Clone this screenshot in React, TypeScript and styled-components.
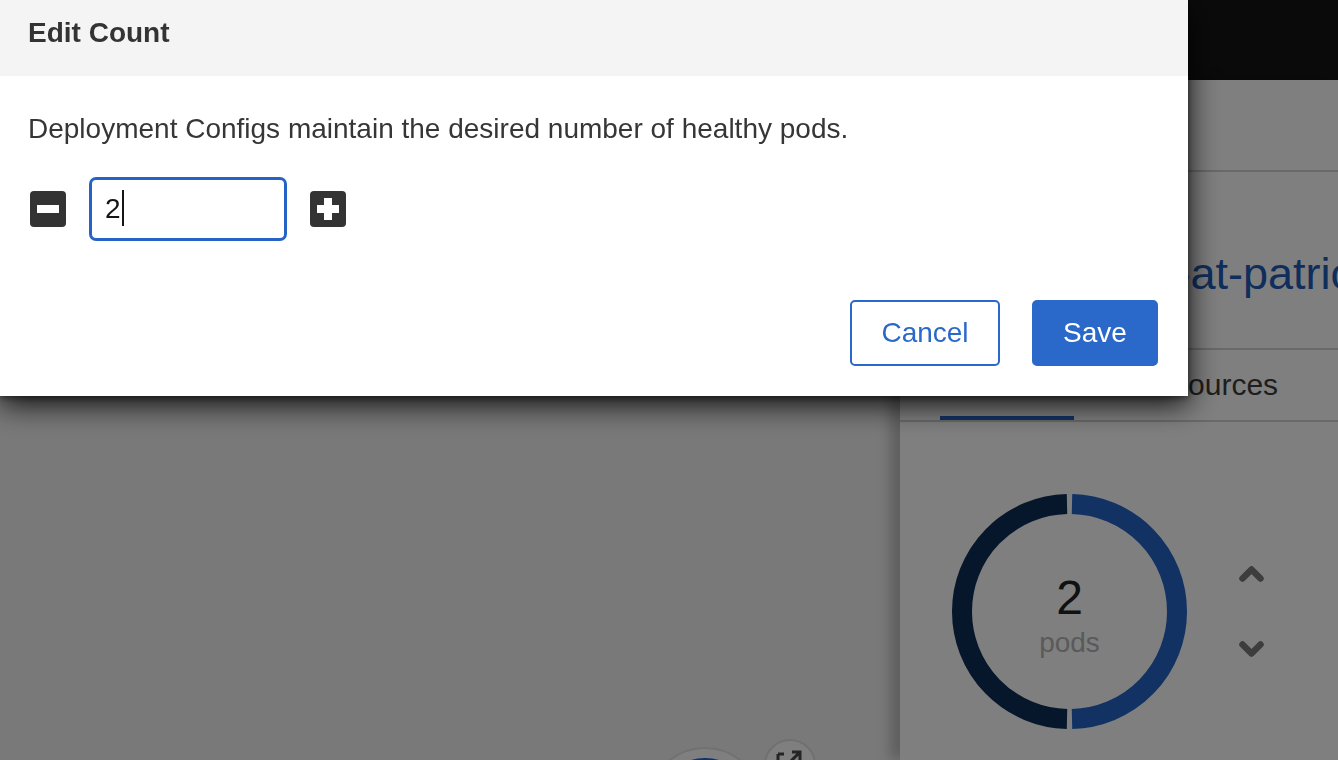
import React from "react";
import styled, { createGlobalStyle } from "styled-components";

const GlobalStyle = createGlobalStyle`
  html, body { margin: 0; padding: 0; }
  body {
    font-family: "Liberation Sans", Arial, sans-serif;
    overflow: hidden;
    background: #f0f0f0;
  }
  * { box-sizing: border-box; }
`;

const Page = styled.div`
  width: 1338px;
  height: 760px;
  display: flex;
  flex-direction: column;
  overflow: hidden;
`;

const Masthead = styled.header`
  flex: none;
  height: 80px;
  background: #151515;
`;

const Main = styled.div`
  flex: 1;
  display: flex;
  min-height: 0;
`;

const Canvas = styled.div`
  flex: 1;
  position: relative;
  background: #f2f2f2;
  overflow: hidden;
`;

const GraphLayer = styled.svg`
  position: absolute;
  left: 640px;
  top: 650px;
`;

const Drawer = styled.aside`
  width: 438px;
  flex: none;
  background: #ffffff;
  box-shadow: -10px 0 12px rgba(0, 0, 0, 0.22);
  display: flex;
  flex-direction: column;
  position: relative;
  z-index: 1;
  overflow: hidden;
`;

const DrawerTop = styled.div`
  height: 92px;
  border-bottom: 2px solid #d2d2d2;
`;

const TitleSection = styled.div`
  height: 178px;
  padding: 75px 0 0 63px;
  border-bottom: 2px solid #d2d2d2;
  white-space: nowrap;
`;

const ResourceTitle = styled.h2`
  margin: 0;
  font-size: 45px;
  line-height: 54px;
  font-weight: 400;
  color: #1f5cb8;
`;

const TabList = styled.div`
  height: 72px;
  display: flex;
  gap: 40px;
  padding-left: 40px;
  border-bottom: 2px solid #d2d2d2;
  white-space: nowrap;
`;

const Tab = styled.div<{ $active?: boolean }>`
  height: 70px;
  padding: 0 21px;
  display: flex;
  align-items: center;
  font-size: 30px;
  color: #3c3c3c;
  box-shadow: ${(p) => (p.$active ? "inset 0 -4px 0 #2464c6" : "none")};
`;

const DonutSection = styled.div`
  padding: 72px 0 0 52px;
  display: flex;
  align-items: center;
  gap: 52px;
`;

const Donut = styled.div`
  width: 235px;
  height: 235px;
  display: grid;
  place-items: center;
  & > * {
    grid-area: 1 / 1;
  }
`;

const DonutLabel = styled.div`
  display: flex;
  flex-direction: column;
  align-items: center;
  gap: 7px;
  margin-top: 8px;
`;

const PodCount = styled.span`
  font-size: 48px;
  line-height: 48px;
  color: #222222;
`;

const PodUnit = styled.span`
  font-size: 28px;
  line-height: 28px;
  color: #b5b5b5;
`;

const ScaleControls = styled.div`
  display: flex;
  flex-direction: column;
  gap: 59px;
`;

const Backdrop = styled.div`
  position: fixed;
  inset: 0;
  background: rgba(0, 0, 0, 0.5);
  z-index: 10;
`;

const Modal = styled.div`
  position: absolute;
  left: 0;
  top: 0;
  width: 1188px;
  background: #ffffff;
  box-shadow: 0 8px 28px rgba(0, 0, 0, 0.9), 0 2px 6px rgba(0, 0, 0, 0.4);
`;

const ModalHeader = styled.div`
  height: 76px;
  padding: 19px 28px 0;
  background: #f4f4f4;
`;

const ModalTitle = styled.h1`
  margin: 0;
  font-size: 28px;
  line-height: 28px;
  font-weight: 700;
  color: #333333;
`;

const ModalBody = styled.div`
  padding: 32px 28px 0;
`;

const Description = styled.p`
  margin: 0 0 27px;
  font-size: 28px;
  line-height: 42px;
  color: #363636;
`;

const CountRow = styled.div`
  display: flex;
  align-items: center;
  gap: 21px;
`;

const IconButton = styled.button`
  width: 40px;
  height: 40px;
  padding: 0;
  border: none;
  background: transparent;
  display: flex;
  align-items: center;
  justify-content: center;
  cursor: pointer;
`;

const InputWrap = styled.div`
  position: relative;
`;

const CountInput = styled.input`
  display: block;
  width: 198px;
  height: 64px;
  padding: 0 0 0 13px;
  border: 3px solid #2563c4;
  border-radius: 7px;
  font-family: "Liberation Sans", Arial, sans-serif;
  font-size: 28px;
  color: #151515;
  outline: none;
  background: #ffffff;
`;

const Caret = styled.span`
  position: absolute;
  left: 33px;
  top: 13px;
  width: 2px;
  height: 36px;
  background: #151515;
`;

const ModalFooter = styled.div`
  display: flex;
  justify-content: flex-end;
  gap: 32px;
  padding: 59px 30px 30px;
`;

const Button = styled.button<{ $primary?: boolean }>`
  height: 66px;
  width: ${(p) => (p.$primary ? "126px" : "150px")};
  border-radius: 5px;
  font-family: "Liberation Sans", Arial, sans-serif;
  font-size: 28px;
  cursor: pointer;
  border: 2px solid #2a69c9;
  background: ${(p) => (p.$primary ? "#2a69c9" : "#ffffff")};
  color: ${(p) => (p.$primary ? "#ffffff" : "#2a69c9")};
`;

const MinusIcon = () => (
  <svg width="36" height="36" viewBox="0 0 36 36">
    <rect x="0" y="0" width="36" height="36" rx="4" fill="#333333" />
    <rect x="7" y="14" width="22" height="8" fill="#ffffff" />
  </svg>
);

const PlusIcon = () => (
  <svg width="36" height="36" viewBox="0 0 36 36">
    <rect x="0" y="0" width="36" height="36" rx="4" fill="#333333" />
    <rect x="7" y="14" width="22" height="8" fill="#ffffff" />
    <rect x="14" y="7" width="8" height="22" fill="#ffffff" />
  </svg>
);

const Chevron = ({ up }: { up?: boolean }) => (
  <svg width="25" height="17" viewBox="0 0 25 17">
    <polyline
      points={up ? "3.5,13.5 12.5,4.5 21.5,13.5" : "3.5,3.5 12.5,12.5 21.5,3.5"}
      fill="none"
      stroke="#7a7a7a"
      strokeWidth="6.5"
      strokeLinecap="round"
      strokeLinejoin="round"
    />
  </svg>
);

const PodDonut = () => {
  const c = 117.5;
  const r = 107.5;
  const d = 2.5 / r;
  const sx = r * Math.sin(d);
  const sy = r * Math.cos(d);
  const right = `M ${c + sx} ${c - sy} A ${r} ${r} 0 0 1 ${c + sx} ${c + sy}`;
  const left = `M ${c - sx} ${c + sy} A ${r} ${r} 0 0 1 ${c - sx} ${c - sy}`;
  return (
    <svg width="235" height="235" viewBox="0 0 235 235">
      <path d={left} fill="none" stroke="#0c2c56" strokeWidth="20" />
      <path d={right} fill="none" stroke="#2464c6" strokeWidth="20" />
    </svg>
  );
};

export default function App() {
  return (
    <>
      <GlobalStyle />
      <Page>
        <Masthead />
        <Main>
          <Canvas>
            <GraphLayer width="200" height="30" viewBox="0 0 200 30">
              <circle cx="65" cy="75" r="57" fill="#ffffff" stroke="#e2e2e2" strokeWidth="2" />
              <circle cx="65" cy="75" r="42" fill="none" stroke="#2464c6" strokeWidth="10" />
              <circle cx="150" cy="35" r="25" fill="#ffffff" stroke="#e0e0e0" strokeWidth="2" />
              <path d="M138 24 h6 M138 24 v12 M152 22 h8 v8 M160 22 l-10 10" fill="none" stroke="#4a4a4a" strokeWidth="3" />
            </GraphLayer>
          </Canvas>
          <Drawer>
            <DrawerTop />
            <TitleSection>
              <ResourceTitle>ruby-ex-git-at-patrick</ResourceTitle>
            </TitleSection>
            <TabList>
              <Tab $active>Details</Tab>
              <Tab>Resources</Tab>
              <Tab>Monitoring</Tab>
            </TabList>
            <DonutSection>
              <Donut>
                <PodDonut />
                <DonutLabel>
                  <PodCount>2</PodCount>
                  <PodUnit>pods</PodUnit>
                </DonutLabel>
              </Donut>
              <ScaleControls>
                <Chevron up />
                <Chevron />
              </ScaleControls>
            </DonutSection>
          </Drawer>
        </Main>
      </Page>
      <Backdrop>
        <Modal role="dialog" aria-label="Edit Count">
          <ModalHeader>
            <ModalTitle>Edit Count</ModalTitle>
          </ModalHeader>
          <ModalBody>
            <Description>Deployment Configs maintain the desired number of healthy pods.</Description>
            <CountRow>
              <IconButton aria-label="Decrement">
                <MinusIcon />
              </IconButton>
              <InputWrap>
                <CountInput type="text" defaultValue="2" aria-label="Count" />
                <Caret />
              </InputWrap>
              <IconButton aria-label="Increment">
                <PlusIcon />
              </IconButton>
            </CountRow>
          </ModalBody>
          <ModalFooter>
            <Button>Cancel</Button>
            <Button $primary>Save</Button>
          </ModalFooter>
        </Modal>
      </Backdrop>
    </>
  );
}
